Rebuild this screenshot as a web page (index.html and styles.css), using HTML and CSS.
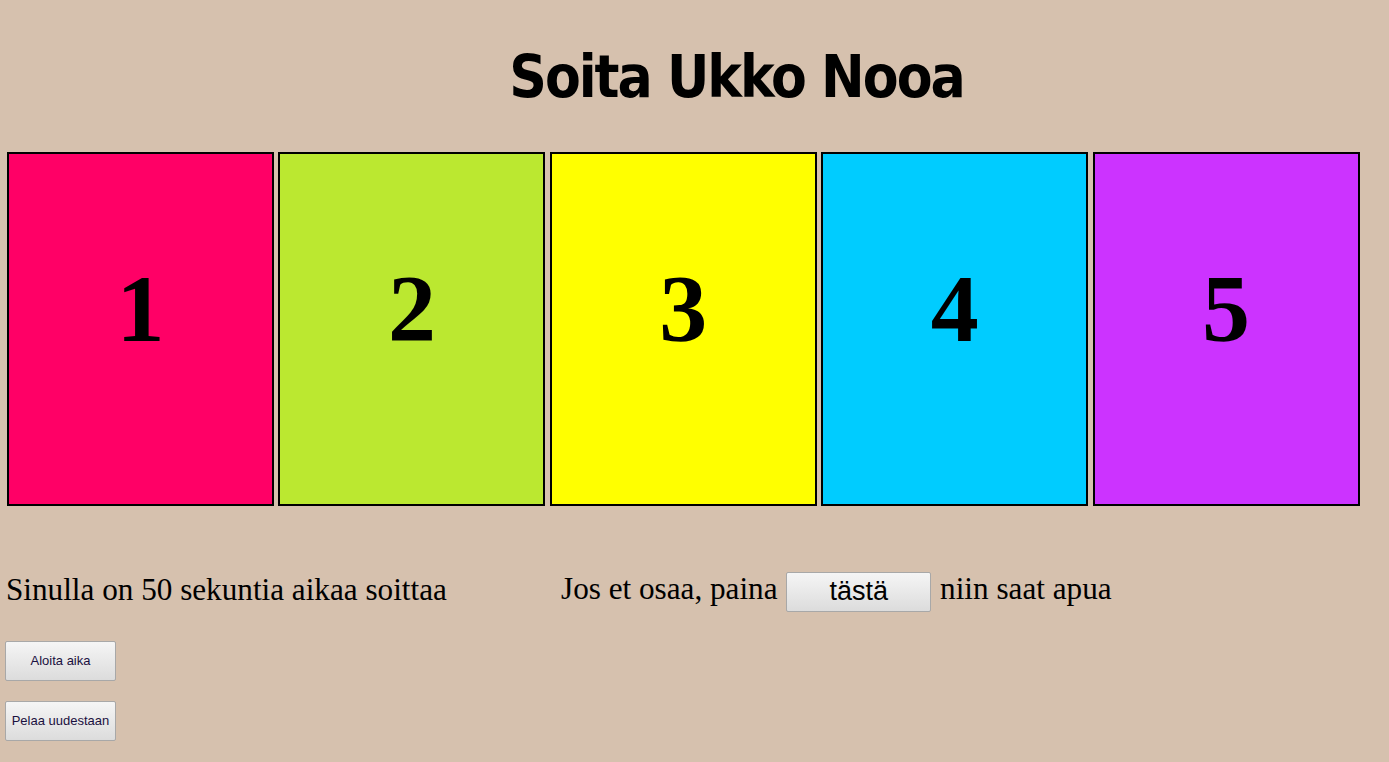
FILE: index.html
```html
<!DOCTYPE html>
<html lang="fi">
<head>
<meta charset="utf-8">
<title>Soita Ukko Nooa</title>
<link rel="stylesheet" href="styles.css">
</head>
<body>
<h1 class="title">Soita Ukko Nooa</h1>
<div class="boxes">
  <div class="box box-1">1</div>
  <div class="box box-2">2</div>
  <div class="box box-3">3</div>
  <div class="box box-4">4</div>
  <div class="box box-5">5</div>
</div>
<div class="info">
  <div class="timer">Sinulla on 50 sekuntia aikaa soittaa</div>
  <div class="help">Jos et osaa, paina <button class="help-btn">tästä</button> niin saat apua</div>
</div>
<div class="controls">
  <button class="small-btn">Aloita aika</button>
  <button class="small-btn">Pelaa uudestaan</button>
</div>
</body>
</html>
```
FILE: styles.css
```css
html, body {
  margin: 0;
  padding: 0;
}
body {
  background: #d6c1ae;
  font-family: "Liberation Serif", "Times New Roman", serif;
  color: #000;
}
.title {
  margin: 0;
  padding: 42px 0 0 84px;
  height: 110px;
  box-sizing: border-box;
  text-align: center;
  font-family: "DejaVu Sans Condensed", "DejaVu Sans", sans-serif;
  font-weight: bold;
  font-size: 58px;
  line-height: 70px;
  letter-spacing: -2px;
}
.boxes {
  display: flex;
  gap: 4.4px;
  padding: 42px 0 0 7px;
}
.box {
  box-sizing: border-box;
  width: 267px;
  height: 354px;
  border: 2px solid #000;
  text-align: center;
  font-family: "Liberation Serif", serif;
  font-weight: bold;
  font-size: 96px;
  line-height: 110px;
  padding-top: 100px;
}
.box-1 { background: #ff0066; }
.box-2 { background: #bbe830; }
.box-3 { background: #ffff00; }
.box-4 { background: #00ccff; }
.box-5 { background: #cc33ff; }
.info {
  display: flex;
  align-items: center;
  margin-top: 63px;
  font-size: 31.2px;
  line-height: 40px;
}
.timer {
  width: 555px;
  padding-left: 6px;
}
.help-btn {
  width: 145px;
  height: 40px;
  margin: 0 1px;
  font-family: "Liberation Sans", Arial, sans-serif;
  font-size: 27px;
  color: #000;
  vertical-align: middle;
  border: 1px solid #a8a8a8;
  border-radius: 2px;
  background: linear-gradient(#f5f5f5, #dcdcdc);
  padding: 0;
}
.controls {
  display: flex;
  flex-direction: column;
  align-items: flex-start;
  gap: 20px;
  padding: 29px 0 0 5px;
}
.small-btn {
  width: 111px;
  height: 40px;
  font-family: "Liberation Sans", Arial, sans-serif;
  font-size: 13px;
  color: #1a1040;
  border: 1px solid #a8a8a8;
  border-radius: 2px;
  background: linear-gradient(#f5f5f5, #dcdcdc);
  padding: 0;
}
```
